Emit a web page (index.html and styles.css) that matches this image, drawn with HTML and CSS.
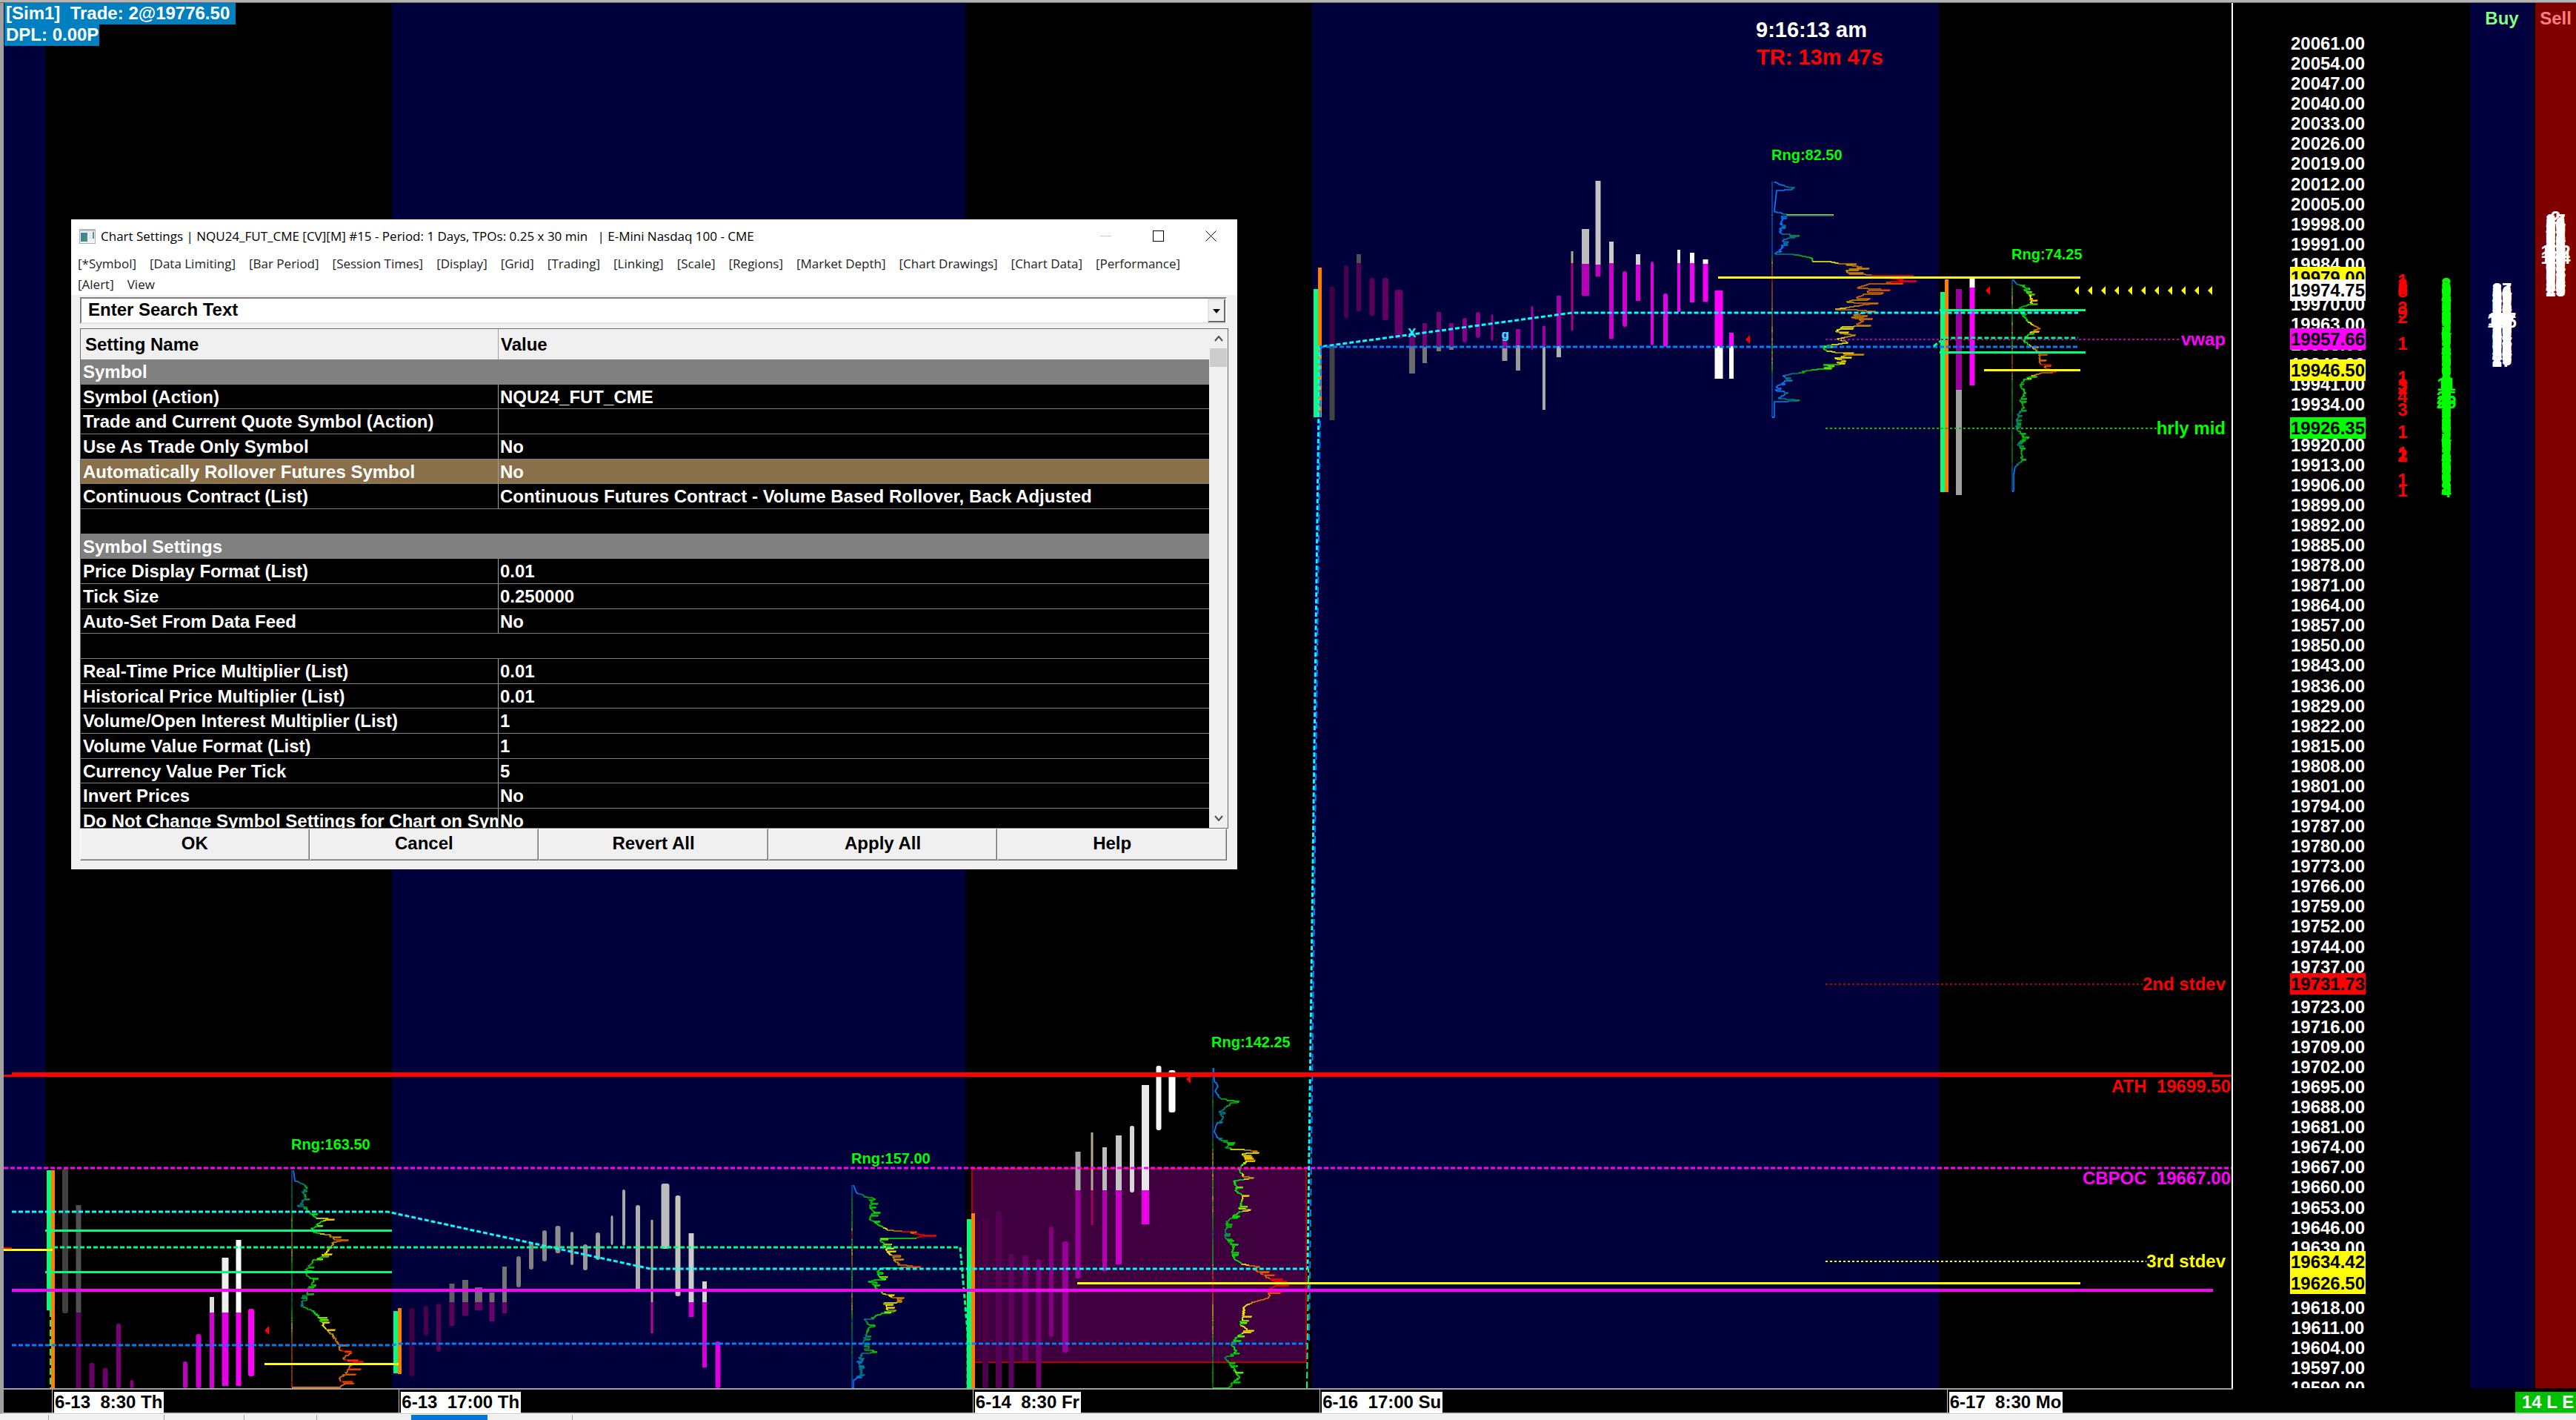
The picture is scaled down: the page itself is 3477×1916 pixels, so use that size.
FILE: index.html
```html
<!DOCTYPE html>
<html lang="en">
<head>
<meta charset="utf-8">
<title>NQU24_FUT_CME Chart</title>
<link rel="stylesheet" href="styles.css">
</head>
<body>
<div class="frame-top"></div>
<main class="workspace">
  <section class="chart" aria-label="TPO profile chart">
    <svg class="plot" id="plot" viewBox="5 4 3007 1869" preserveAspectRatio="none" aria-hidden="true"></svg>
    <div class="account">
      <span class="account-line">[Sim1]&nbsp; Trade: 2@19776.50&nbsp;</span>
      <span class="account-line">DPL: 0.00P</span>
    </div>
    <span class="tag clock" style="--x:2370;--y:40">9:16:13 am</span>
    <span class="tag clock red" style="--x:2371;--y:77">TR: 13m 47s</span>
    <span class="tag range" style="--x:2391;--y:209">Rng:82.50</span>
    <span class="tag range" style="--x:2715;--y:343">Rng:74.25</span>
    <span class="tag range" style="--x:393;--y:1544">Rng:163.50</span>
    <span class="tag range" style="--x:1149;--y:1563">Rng:157.00</span>
    <span class="tag range" style="--x:1635;--y:1406">Rng:142.25</span>
    <span class="tag study magenta" style="--x:3004;--y:457">vwap</span>
    <span class="tag study lime" style="--x:3004;--y:577">hrly mid</span>
    <span class="tag study red" style="--x:3004;--y:1327">2nd stdev</span>
    <span class="tag study red" style="--x:3011;--y:1465">ATH&nbsp; 19699.50</span>
    <span class="tag study magenta" style="--x:3011;--y:1589">CBPOC&nbsp; 19667.00</span>
    <span class="tag study yellow" style="--x:3004;--y:1701">3rd stdev</span>
    <span class="tag letter" style="--x:2032;--y:451">g</span>
    <span class="tag letter" style="--x:1906;--y:449">X</span>
  </section>
  <aside class="scale">
    <div class="ladder">
      <ol class="prices">
        <li>20061.00</li><li>20054.00</li><li>20047.00</li><li>20040.00</li><li>20033.00</li><li>20026.00</li><li>20019.00</li><li>20012.00</li>
        <li>20005.00</li><li>19998.00</li><li>19991.00</li><li>19984.00</li><li>19977.00</li><li>19970.00</li><li>19963.00</li><li>19955.00</li>
        <li>19948.00</li><li>19941.00</li><li>19934.00</li><li>19927.00</li><li>19920.00</li><li>19913.00</li><li>19906.00</li><li>19899.00</li>
        <li>19892.00</li><li>19885.00</li><li>19878.00</li><li>19871.00</li><li>19864.00</li><li>19857.00</li><li>19850.00</li><li>19843.00</li>
        <li>19836.00</li><li>19829.00</li><li>19822.00</li><li>19815.00</li><li>19808.00</li><li>19801.00</li><li>19794.00</li><li>19787.00</li>
        <li>19780.00</li><li>19773.00</li><li>19766.00</li><li>19759.00</li><li>19752.00</li><li>19744.00</li><li>19737.00</li><li>19730.00</li>
        <li>19723.00</li><li>19716.00</li><li>19709.00</li><li>19702.00</li><li>19695.00</li><li>19688.00</li><li>19681.00</li><li>19674.00</li>
        <li>19667.00</li><li>19660.00</li><li>19653.00</li><li>19646.00</li><li>19639.00</li><li>19632.00</li><li>19625.00</li><li>19618.00</li>
        <li>19611.00</li><li>19604.00</li><li>19597.00</li><li>19590.00</li>
      </ol>
      <span class="mark on-yellow" style="--y:374">19979.00</span>
      <span class="mark on-white" style="--y:391">19974.75</span>
      <span class="mark on-magenta" style="--y:457">19957.66</span>
      <span class="mark on-yellow" style="--y:499">19946.50</span>
      <span class="mark on-lime" style="--y:577">19926.35</span>
      <span class="mark on-red" style="--y:1327">19731.73</span>
      <span class="mark on-yellow" style="--y:1702">19634.42</span>
      <span class="mark on-yellow" style="--y:1731">19626.50</span>
    </div>
    <div class="depth bid" id="bid"></div>
    <div class="depth ask" id="ask"></div>
  </aside>
  <section class="book buy" id="buy"><h2 class="book-title">Buy</h2></section>
  <section class="book sell" id="sell"><h2 class="book-title">Sell</h2></section>
</main>
<footer class="axis">
  <div class="dates">
    <span class="date" style="--x:70">6-13&nbsp; 8:30 Th</span>
    <span class="date" style="--x:538">6-13&nbsp; 17:00 Th</span>
    <span class="date" style="--x:1312">6-14&nbsp; 8:30 Fr</span>
    <span class="date" style="--x:1780">6-16&nbsp; 17:00 Su</span>
    <span class="date" style="--x:2626">6-17&nbsp; 8:30 Mo</span>
  </div>
  <span class="position">14 L E</span>
</footer>
<div class="tabs">
  <span class="tab tab-a"></span><span class="tab tab-b"></span><span class="tab tab-c"></span><span class="tab tab-d"></span><span class="tab tab-e"></span><span class="tab tab-on"></span><span class="tab tab-f"></span>
</div>

<section class="dialog" role="dialog" aria-labelledby="dialog-title">
  <header class="titlebar">
    <svg class="app-icon" viewBox="0 0 22 20" aria-hidden="true">
      <defs><linearGradient id="shade" x1="0" y1="0" x2="1" y2="1"><stop offset="0" stop-color="#3f78b5"/><stop offset="1" stop-color="#3f9c66"/></linearGradient></defs>
      <rect x=".5" y=".5" width="21" height="19" fill="#f4f4f8" stroke="#a9afbd"/>
      <path d="M1 2h20" stroke="#b9c1d0" stroke-width="2"/>
      <rect x="2" y="5" width="9" height="12" fill="url(#shade)"/>
      <path d="M13 6h4M13 9h4M13 12h4" stroke="#c9ced8"/>
      <path d="M19 4v9" stroke="#3f9c86" stroke-width="2"/>
    </svg>
    <h1 class="title" id="dialog-title">Chart Settings | NQU24_FUT_CME [CV][M] #15 - Period: 1 Days, TPOs: 0.25 x 30 min &nbsp; | E-Mini Nasdaq 100 - CME</h1>
    <div class="window-buttons">
      <button class="window-button" aria-label="Minimize" disabled><svg viewBox="0 0 16 16"><path d="M0 7.5h15" stroke="#c4c4c4"/></svg></button>
      <button class="window-button" aria-label="Maximize"><svg viewBox="0 0 16 16"><rect x=".5" y=".5" width="14" height="14" fill="none" stroke="#000"/></svg></button>
      <button class="window-button" aria-label="Close"><svg viewBox="0 0 16 16"><path d="M.5 .5l14 14M14.5 .5l-14 14" stroke="#000"/></svg></button>
    </div>
  </header>
  <nav class="menu">
    <button>[*Symbol]</button><button>[Data Limiting]</button><button>[Bar Period]</button><button>[Session Times]</button><button>[Display]</button><button>[Grid]</button><button>[Trading]</button><button>[Linking]</button><button>[Scale]</button><button>[Regions]</button><button>[Market Depth]</button><button>[Chart Drawings]</button><button>[Chart Data]</button><button>[Performance]</button><button>[Alert]</button><button>View</button>
  </nav>
  <div class="dialog-body">
    <div class="search">
      <input class="search-text" type="text" aria-label="Search settings" value="Enter Search Text">
      <button class="search-open" aria-label="Show recent searches"><svg viewBox="0 0 12 8"><path d="M0 1h12L6 8z"/></svg></button>
    </div>
    <div class="list">
      <div class="list-view">
        <table class="settings">
          <thead><tr><th class="name">Setting Name</th><th>Value</th></tr></thead>
          <tbody>
            <tr class="group"><td colspan="2">Symbol</td></tr>
            <tr><td>Symbol (Action)</td><td>NQU24_FUT_CME</td></tr>
            <tr><td>Trade and Current Quote Symbol (Action)</td><td></td></tr>
            <tr><td>Use As Trade Only Symbol</td><td>No</td></tr>
            <tr class="selected"><td>Automatically Rollover Futures Symbol</td><td>No</td></tr>
            <tr><td>Continuous Contract (List)</td><td>Continuous Futures Contract - Volume Based Rollover, Back Adjusted</td></tr>
            <tr><td colspan="2">&nbsp;</td></tr>
            <tr class="group"><td colspan="2">Symbol Settings</td></tr>
            <tr><td>Price Display Format (List)</td><td>0.01</td></tr>
            <tr><td>Tick Size</td><td>0.250000</td></tr>
            <tr><td>Auto-Set From Data Feed</td><td>No</td></tr>
            <tr><td colspan="2">&nbsp;</td></tr>
            <tr><td>Real-Time Price Multiplier (List)</td><td>0.01</td></tr>
            <tr><td>Historical Price Multiplier (List)</td><td>0.01</td></tr>
            <tr><td>Volume/Open Interest Multiplier (List)</td><td>1</td></tr>
            <tr><td>Volume Value Format (List)</td><td>1</td></tr>
            <tr><td>Currency Value Per Tick</td><td>5</td></tr>
            <tr><td>Invert Prices</td><td>No</td></tr>
            <tr><td>Do Not Change Symbol Settings for Chart on Symbol</td><td>No</td></tr>
          </tbody>
        </table>
      </div>
      <div class="scrollbar">
        <button class="scroll-step" aria-label="Scroll up"><svg viewBox="0 0 12 8"><path d="M1 7l5-6 5 6"/></svg></button>
        <div class="scroll-track"><div class="scroll-thumb"></div></div>
        <button class="scroll-step" aria-label="Scroll down"><svg viewBox="0 0 12 8"><path d="M1 1l5 6 5-6"/></svg></button>
      </div>
    </div>
    <div class="actions">
      <button>OK</button><button>Cancel</button><button>Revert All</button><button>Apply All</button><button>Help</button>
    </div>
  </div>
</section>
<script src="chart.js"></script>
</body>
</html>
```
FILE: styles.css
```css
* { box-sizing: border-box; }

body {
  margin: 0;
  height: 100vh;
  display: flex;
  flex-direction: column;
  overflow: hidden;
  background: #000;
  color: #fff;
  font: bold 24px/29px "Liberation Sans", Arial, sans-serif;
}

button { font: inherit; color: inherit; background: none; border: 0; padding: 0; margin: 0; }

.frame-top { height: 4px; flex: none; background: #b4b4b4; border-bottom: 1px solid #696969; }

.workspace { flex: 1; min-height: 0; display: flex; border-left: 5px solid #a0a0a0; }

.chart { flex: 1; position: relative; overflow: hidden; border-right: 2px solid #fff; }
.plot { display: block; width: 100%; height: 100%; }

.account { position: absolute; left: 1px; top: 0; display: flex; flex-direction: column; align-items: flex-start; }
.account-line { background: #0080c0; padding: 0 1px 0 2px; height: 29px; line-height: 27px; white-space: nowrap; }

/* Chart labels share the 3007 x 1869 space of the plot. */
.tag {
  position: absolute;
  left: calc((var(--x) - 5) / 3007 * 100%);
  top: calc((var(--y) - 4) / 1869 * 100%);
  margin-top: -14px;
  white-space: nowrap;
}
.clock { font-size: 29px; }
.range { font-size: 20px; color: #0f0; }
.study { left: auto; right: calc((3012 - var(--x)) / 3007 * 100%); }
.letter { font-size: 17px; width: 16px; margin-left: -8px; text-align: center; color: #0ff; }

.red { color: #f00; }
.lime { color: #0f0; }
.yellow { color: #ff0; }
.magenta { color: #f0f; }

.scale { width: 320px; flex: none; display: flex; overflow: hidden; padding-left: 77px; }
.ladder { position: relative; width: 102px; padding-top: 41px; }
.prices {
  list-style: none;
  margin: 0;
  padding: 0;
  height: calc(100% + 14px);
  display: flex;
  flex-direction: column;
  justify-content: space-between;
  line-height: 27px;
  text-align: center;
}
.mark {
  position: absolute;
  left: 0;
  width: 102px;
  top: calc((var(--y) - 4) / 1869 * 100%);
  margin-top: -14px;
  text-align: center;
  color: #000;
}
.on-yellow { background: #ff0; }
.on-white { background: #fff; }
.on-magenta { background: #f0f; }
.on-lime { background: #0f0; }
.on-red { background: #f00; }

.depth { position: relative; }
.bid { width: 100px; color: #f00; }
.ask { width: 18px; color: #0f0; }
.size {
  position: absolute;
  left: -20px;
  right: -20px;
  top: calc((var(--y) - 4) / 1869 * 100%);
  margin-top: -14px;
  text-align: center;
}

.book { position: relative; flex: none; }
.book-title { margin: 0; padding-top: 6px; font: inherit; text-align: center; }
.buy { width: 86px; background: #000040; margin-right: 2px; }
.sell { width: 55px; background: #800000; }
.buy .book-title { color: #80ff80; }
.sell .book-title { color: #ff8080; }

.axis { height: 35px; flex: none; display: flex; border-left: 5px solid #a0a0a0; border-bottom: 2px solid #c8c8c8; }
.dates { flex: 1; position: relative; border-top: 2px solid #a0a0a0; }
.date {
  position: absolute;
  left: calc((var(--x) - 5) / 3007 * 100%);
  top: 0;
  height: 32px;
  border-left: 1px solid #c8c8c8;
  padding: 3px 2px 0 3px;
  white-space: nowrap;
  color: #000;
  line-height: 28px;
  background: linear-gradient(#fff, #fff) 2px 3px / 100% 29px no-repeat;
}
.position {
  flex: none;
  width: 82px;
  margin: 5px 0 0 381px;
  padding-left: 9px;
  background: #00c000;
  line-height: 27px;
  white-space: nowrap;
}

.tabs { height: 8px; flex: none; display: flex; background: #f0f0f0; border-top: 1px solid #fff; }
.tab { border-right: 1px solid #a0a0a0; }
.tab-a { width: 66px; }
.tab-b { width: 156px; }
.tab-c { width: 108px; }
.tab-d { width: 98px; }
.tab-e { width: 127px; border: 0; }
.tab-on { width: 103px; background: #0078d7; border: 0; }
.tab-f { width: 115px; }

.dialog {
  position: absolute;
  left: 96px;
  top: 296px;
  width: 1574px;
  background: #fff;
  color: #000;
}
.titlebar { height: 45px; display: flex; align-items: center; padding-left: 11px; }
.app-icon { width: 22px; height: 20px; margin-right: 7px; flex: none; }
.title { margin: 0; flex: 1; font: 17px/24px "Open Sans", "Segoe UI", sans-serif; white-space: nowrap; }
.window-buttons { display: flex; }
.window-button { width: 71px; height: 43px; display: flex; align-items: center; justify-content: center; }
.window-button svg { width: 16px; height: 16px; }
.menu {
  display: flex;
  flex-wrap: wrap;
  column-gap: 18px;
  padding: 1px 60px 0 9px;
  height: 57px;
  color: #222;
  font: 17px/28px "Open Sans", "Segoe UI", sans-serif;
}
.dialog-body { background: #f0f0f0; padding: 3px 12px 12px; }

.search {
  display: flex;
  height: 36px;
  margin: 0 2px 6px 0;
  background: #fff;
  border: 2px solid;
  border-color: #808080 #fff #e3e3e3 #808080;
}
.search-text { flex: 1; border: 0; outline: 0; padding: 0 0 3px 9px; font: inherit; color: #000; background: none; }
.search-open { width: 24px; background: #f0f0f0; border: 2px solid; border-color: #e3e3e3 #696969 #696969 #e3e3e3; display: flex; align-items: center; justify-content: center; }
.search-open svg { width: 10px; height: 7px; }

.list { display: flex; height: 675px; border: 1px solid #696969; }
.list-view { flex: 1; overflow: hidden; background: #000; }
.settings { width: 100%; height: 681px; border-collapse: separate; border-spacing: 0; table-layout: fixed; color: #fff; }
.settings th { height: 41px; padding: 0 3px; text-align: left; background: #f0f0f0; color: #000; border-right: 1px solid #a0a0a0; }
.settings th:last-child { border-right: 0; }
.settings th.name { width: 564px; padding-left: 6px; }
.settings td { padding: 0 0 0 3px; border-bottom: 1px solid #808080; white-space: nowrap; overflow: hidden; }
.settings td:first-child:not(:last-child) { border-right: 1px solid #a0a0a0; }
.settings td:nth-child(2) { padding-left: 2px; }
.settings .group { background: #808080; }
.settings .selected { background: #8a704a; }

.scrollbar { width: 25px; display: flex; flex-direction: column; background: #f0f0f0; padding: 0 1px; }
.scroll-step { height: 26px; display: flex; align-items: center; justify-content: center; }
.scroll-step svg { width: 12px; height: 8px; fill: none; stroke: #505050; stroke-width: 2; }
.scroll-track { flex: 1; }
.scroll-thumb { height: 25px; background: #cdcdcd; }

.actions { display: flex; margin-right: 2px; }
.actions button {
  flex: 1;
  height: 43px;
  padding-bottom: 4px;
  background: #f0f0f0;
  border: 1px solid;
  border-color: #fff #696969 #696969 #fff;
  box-shadow: inset -1px -1px #b4b4b4;
}
```
FILE: chart.js
```js
const NS = 'http://www.w3.org/2000/svg';
const plot = document.getElementById('plot');

function add(name, attrs) {
  const el = document.createElementNS(NS, name);
  for (const key in attrs) el.setAttribute(key, attrs[key]);
  plot.appendChild(el);
}
function rect(x1, y1, x2, y2, fill) {
  add('rect', { x: x1, y: y1, width: x2 - x1, height: y2 - y1, fill });
}
function line(points, stroke, width, dash) {
  add('polyline', { points, stroke, fill: 'none', 'stroke-width': width, 'stroke-dasharray': dash || 'none' });
}

// Overnight sessions
[[5, 61], [529, 1303], [1771, 2617]].forEach(([a, b]) => rect(a, 4, b, 1873, '#00003a'));

// Prior day value area
add('rect', { x: 1312, y: 1577, width: 451, height: 261, fill: '#400040', stroke: '#b00000', 'stroke-width': 2 });

// Session open ranges: x, green top/bottom, orange top/bottom
[[63, 1579, 1768, 1579, 1873], [531, 1769, 1853, 1765, 1854], [1305, 1645, 1873, 1637, 1873],
 [1773, 390, 563, 361, 563], [2619, 394, 664, 377, 664]].forEach(([x, a, b, c, d]) => {
  rect(x, a, x + 6, b, '#00ff80');
  rect(x + 6, c, x + 11, d, '#ff8000');
});

// TPO columns: centre, width, then [bottom, colour] steps from the top
const columns = [
  [88, 8, 1577, 1772, '#404040'], [106, 7, 1626, 1771, '#505050', 1873, '#5c005c'], [124, 7, 1839, 1873, '#660066'],
  [142, 7, 1846, 1873, '#6e006e'], [160, 6, 1786, 1873, '#7c007c'], [178, 5, 1862, 1873, '#860086'],
  [250, 6, 1837, 1873, '#c000c0'], [268, 7, 1800, 1873, '#cc00cc'], [286, 6, 1750, 1771, '#ddd', 1873, '#d800d8'],
  [304, 9, 1697, 1771, '#eee', 1870, '#e600e6'], [322, 7, 1673, 1771, '#fff', 1870, '#f200f2'], [339, 8, 1766, 1857, '#f0f'],
  [556, 7, 1765, 1857, '#400040'], [575, 6, 1762, 1802, '#4c004c'], [592, 6, 1759, 1824, '#540054'],
  [610, 7, 1732, 1757, '#606060', 1789, '#5c005c'], [628, 8, 1727, 1757, '#666', 1775, '#600060'],
  [646, 10, 1737, 1757, '#6c6c6c', 1768, '#660066'], [664, 7, 1744, 1757, '#707070', 1783, '#6a006a'],
  [681, 6, 1709, 1757, '#757575', 1772, '#700070'], [700, 6, 1695, 1737, '#7c7c7c'], [717, 6, 1676, 1713, '#828282'],
  [735, 6, 1660, 1702, '#888'], [753, 7, 1654, 1691, '#8e8e8e'], [772, 4, 1662, 1707, '#949494'],
  [790, 6, 1679, 1714, '#999'], [807, 6, 1663, 1700, '#9f9f9f'], [826, 3, 1640, 1680, '#a4a4a4'],
  [842, 4, 1605, 1681, '#a8a8a8'], [861, 6, 1626, 1741, '#aeaeae'], [880, 3, 1646, 1757, '#b4a890', 1799, '#c000a0'],
  [898, 11, 1597, 1685, '#bcbcbc'], [915, 7, 1613, 1749, '#c4c4b8'], [933, 7, 1664, 1757, '#ccc', 1777, '#cc00cc'],
  [951, 6, 1729, 1757, '#d4d4d4', 1845, '#d400d4'], [969, 7, 1810, 1873, '#dc00dc'],
  [1330, 8, 1643, 1873, '#4a0048'], [1348, 8, 1634, 1873, '#560056'], [1365, 7, 1692, 1873, '#5e005e'],
  [1384, 8, 1694, 1838, '#680068'], [1402, 7, 1699, 1873, '#740074'], [1419, 6, 1655, 1804, '#800080'],
  [1438, 8, 1675, 1825, '#960096'], [1455, 7, 1554, 1606, '#a8a8a8', 1725, '#9c009c'],
  [1474, 3, 1528, 1606, '#b4a890', 1653, '#a80060'], [1491, 6, 1548, 1606, '#bbb', 1715, '#b000b0'],
  [1510, 8, 1532, 1606, '#c4c4c4', 1706, '#c400c4'], [1528, 6, 1519, 1609, '#d8d8d8'],
  [1546, 10, 1464, 1606, '#e8e8e8', 1652, '#e0e'], [1564, 7, 1438, 1525, '#f4f4f4'], [1582, 9, 1444, 1501, '#fff'],
  [1798, 7, 387, 466, '#400040', 567, '#444'], [1817, 6, 358, 430, '#4a004a'], [1834, 6, 343, 355, '#505050', 420, '#540054'],
  [1852, 7, 375, 426, '#5a005a'], [1870, 8, 375, 432, '#600060'], [1888, 11, 391, 457, '#660066'],
  [1906, 8, 448, 467, '#6c006c', 504, '#6c6c6c'], [1923, 6, 436, 468, '#720072', 490, '#777'],
  [1942, 6, 421, 468, '#780078', 474, '#777'], [1959, 6, 436, 468, '#7e007e', 472, '#777'],
  [1977, 6, 429, 462, '#840084'], [1995, 6, 421, 456, '#8a008a'], [2014, 3, 424, 460, '#90008a'],
  [2031, 7, 448, 470, '#960096', 487, '#999'], [2049, 6, 444, 466, '#9a009a', 500, '#999'], [2068, 3, 413, 472, '#a000a0'],
  [2084, 4, 440, 468, '#a000a0', 553, '#a8a8a8'], [2104, 6, 399, 467, '#a800a8', 482, '#b0b0b0'],
  [2122, 3, 339, 355, '#b0b080', 446, '#b00080'], [2140, 10, 309, 356, '#bcbcbc', 399, '#b800b8'],
  [2157, 7, 244, 357, '#c4c4c4', 373, '#c000c0'], [2175, 6, 326, 355, '#ccc', 457, '#c800c8'],
  [2193, 6, 366, 441, '#d000d0'], [2211, 6, 343, 357, '#d4d4d4', 406, '#d800d8'], [2230, 4, 353, 466, '#d0d'],
  [2248, 6, 396, 468, '#e400e4'], [2266, 4, 337, 355, '#eee', 421, '#ea00ea'], [2284, 6, 341, 355, '#fff', 408, '#f400f4'],
  [2302, 7, 350, 356, '#fff', 407, '#f800f8'], [2320, 11, 392, 467, '#f0f', 511, '#fff'], [2337, 6, 449, 467, '#f0f', 511, '#fff'],
  [2644, 8, 390, 526, '#9a009a', 668, '#a0a0a0'], [2662, 7, 375, 388, '#fff', 520, '#f0f']
];
columns.forEach(([x, w, top, ...steps]) => {
  for (let i = 0; i < steps.length; i += 2) {
    add('rect', { x: x - w / 2, y: top, width: w, height: steps[i] - top, fill: steps[i + 1], rx: i || steps.length > 2 ? 0 : 3 });
    top = steps[i];
  }
});

// Volume profiles: base x, largest volume, then y / volume pairs
const profiles = [
  [394, 90, 1579,2, 1593,4, 1597,16, 1603,21, 1607,14, 1615,20, 1627,8, 1631,20, 1633,21, 1643,32, 1644,48, 1650,38, 1657,28, 1662,30, 1666,50, 1672,58, 1674,67, 1676,56, 1683,54, 1690,46, 1697,37, 1700,30, 1713,20, 1720,20, 1727,30, 1737,22, 1747,22, 1748,14, 1763,14, 1768,28, 1777,37, 1787,42, 1793,46, 1800,54, 1808,60, 1823,66, 1825,80, 1833,68, 1839,86, 1843,80, 1852,74, 1860,64, 1867,70, 1872,66],
  [1150, 98, 1599,2, 1609,6, 1613,16, 1621,28, 1630,24, 1635,30, 1645,24, 1652,36, 1659,48, 1661,66, 1666,98, 1670,86, 1671,38, 1681,44, 1688,48, 1698,56, 1706,64, 1709,92, 1711,40, 1717,32, 1725,40, 1729,24, 1739,34, 1747,46, 1754,66, 1758,44, 1768,48, 1777,30, 1780,18, 1790,24, 1804,18, 1821,16, 1824,34, 1826,14, 1838,8, 1852,14, 1860,6, 1862,2, 1873,2],
  [1637, 88, 1441,1, 1459,2, 1464,8, 1472,3, 1483,12, 1485,28, 1493,20, 1500,10, 1508,14, 1517,5, 1527,2, 1537,8, 1542,22, 1549,18, 1554,56, 1557,40, 1566,46, 1577,36, 1587,42, 1589,54, 1593,30, 1606,32, 1616,42, 1630,36, 1632,52, 1635,36, 1647,20, 1669,16, 1681,28, 1694,26, 1705,38, 1709,62, 1712,56, 1722,72, 1732,88, 1741,76, 1751,76, 1756,56, 1763,42, 1777,42, 1785,36, 1794,46, 1802,34, 1814,26, 1824,32, 1831,16, 1841,24, 1858,36, 1869,24, 1873,24],
  [2392, 176, 245,3, 252,20, 255,28, 257,6, 285,3, 289,20, 290,68, 291,14, 303,12, 315,12, 318,28, 323,16, 333,14, 342,4, 343,30, 347,52, 352,56, 353,80, 357,100, 360,122, 364,98, 370,106, 372,162, 375,160, 377,176, 382,150, 383,130, 388,116, 391,160, 392,132, 400,118, 407,102, 410,130, 417,86, 421,128, 427,104, 433,124, 440,110, 441,94, 448,86, 452,112, 457,88, 462,104, 467,66, 473,74, 478,104, 483,86, 487,100, 492,70, 494,84, 498,60, 503,28, 507,16, 513,20, 520,8, 527,6, 530,20, 537,10, 540,38, 542,3, 563,3],
  [2716, 52, 377,1, 383,6, 387,16, 393,18, 400,26, 410,26, 415,10, 423,12, 432,20, 443,36, 450,22, 460,16, 470,30, 477,38, 487,36, 493,42, 500,52, 504,36, 510,20, 518,10, 530,18, 540,12, 550,16, 560,8, 577,6, 590,16, 598,8, 610,14, 623,12, 630,4, 640,2, 663,2]
];
const heat = r => r < .1 ? '#0080ff' : r < .2 ? '#008080' : r < .3 ? '#00c000' : r < .45 ? '#0e0' : r < .55 ? '#ff0' : r < .63 ? '#c8a000' : r < .88 ? '#e07000' : '#f00';
profiles.forEach(([base, max, ...pairs]) => {
  const end = pairs[pairs.length - 2];
  let k = 0, seed = base, last = pairs[1];
  for (let y = pairs[0]; y < end; y++) {
    while (pairs[k + 2] <= y) k += 2;
    const t = (y - pairs[k]) / (pairs[k + 2] - pairs[k]);
    let v = pairs[k + 1] + t * (pairs[k + 3] - pairs[k + 1]);
    seed = (seed * 16807) % 2147483647;
    const r = seed / 2147483647;
    if (v > 6) v += r > .85 ? 4 + v * .15 : (r - .5) * 4;
    line(`${base + last},${y} ${base + v},${y} ${base + v},${y + 1}`, heat(v / max), 1.5);
    line(`${base},${y} ${base},${y + 1}`, heat(v / max), 1);
    last = v;
  }
  line(`${base},${end} ${base + last},${end}`, heat(last / max), 2);
});

// Levels
line('5,1576 3012,1576', '#f0f', 3, '6 3');
line('16,1635 523,1635 878,1712 1765,1712 1781,468 2122,422 2805,422', '#0ff', 3, '6 3');
line('16,1815 529,1815 540,1813 1765,1813', '#0080ff', 3, '6 3');
line('1767,1809 1783,468', '#0080ff', 2, '9 5');
line('1781,468 2805,468', '#0080ff', 3, '6 3');
line('72,1683 1296,1683 1306,1797 1306,1873', '#00ff80', 3, '6 3');
line('68,1768 68,1873', '#00ff80', 2, '9 4');
line('1764,1873 1766,1712', '#00ff80', 2, '9 4');
line('2610,467 2625,456 2805,456', '#00ff80', 3, '6 3');
[[1660, 61, 529], [1716, 61, 529], [418, 2618, 2815], [475, 2618, 2815]].forEach(([y, a, b]) => rect(a, y - 1, b, y + 2, '#00ff80'));
rect(16, 1739, 2987, 1743, '#f0f');
rect(5, 1683, 16, 1685, '#f00');
[[1686, 5, 71], [1840, 357, 538], [1731, 1454, 2808], [374, 2319, 2808], [499, 2678, 2808]].forEach(([y, a, b]) => rect(a, y - 1, b, y + 2, '#ff0'));
rect(16, 1447, 2987, 1453, '#f00');
rect(5, 1450, 3012, 1453, '#f00');
line('2464,458 2944,458', '#b000b0', 2, '3 3');
line('2464,578 2914,578', '#00c000', 2, '3 3');
line('2464,1328 2892,1328', '#b00000', 2, '3 3');
line('2464,1702 2897,1702', '#ff0', 2, '3 3');

function arrow(x, y, fill) {
  add('path', { d: `M${x - 3} ${y}l6 -6v12z`, fill });
}
for (let i = 0; i < 11; i++) arrow(2803 + i * 18, 392, '#ff0');
[[2683, 392], [2359, 458], [360, 1795], [1604, 1456]].forEach(([x, y]) => arrow(x, y, '#f00'));

// Resting sizes on the depth columns
function sizes(id, entries) {
  const box = document.getElementById(id);
  entries.forEach(([y, text]) => {
    const el = document.createElement('span');
    el.className = 'size';
    el.style.setProperty('--y', y);
    el.textContent = text;
    box.appendChild(el);
  });
}
function run(from, to, step, digits) {
  const out = [];
  for (let y = from, i = 7; y <= to; y += step, i = (i * 31 + 11) % 97) out.push([y, String(20 + i % 79).slice(0, digits)]);
  return out;
}
sizes('bid', [[378, 1], [384, 2], [388, 3], [392, 8], [415, 3], [421, 9], [427, 2], [463, 1], [509, 1], [519, 3], [523, 2], [534, 4], [552, 3], [582, 1], [611, 1], [614, 2], [647, 1], [661, 1]]);
sizes('ask', [...run(383, 662, 3, 1), [518, 11], [536, 25], [542, 26]]);
sizes('buy', [...run(390, 487, 2, 2), [430, 117], [433, 156]]);
sizes('sell', [[293, 2], ...run(297, 391, 2, 2), [339, 192], [347, 134]]);
```
